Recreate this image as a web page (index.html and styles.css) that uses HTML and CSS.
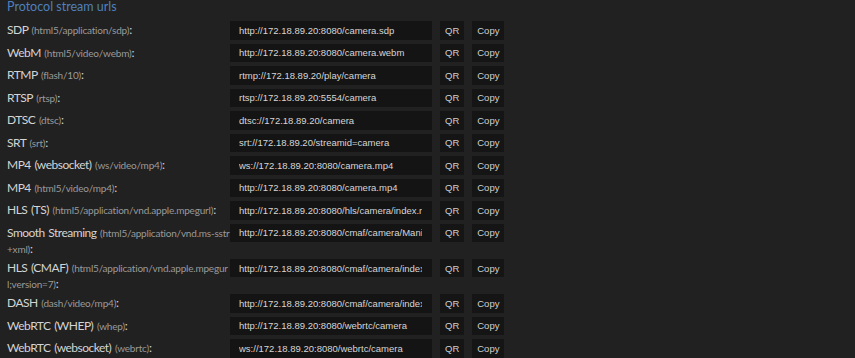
FILE: index.html
```html
<!DOCTYPE html>
<html lang="en">
<head>
    <meta charset="UTF-8">
    <title>Protocol stream urls</title>
    <link rel="stylesheet" href="styles.css">
</head>
<body>

<div id="urlPanel">
    <h3 class="panel-title">Protocol stream urls</h3>
    <div class="url-list">
        <div class="url-row">
            <label>SDP <span class="mime">(html5/application/sdp)</span>:</label>
            <input type="text" readonly value="http://172.18.89.20:8080/camera.sdp">
            <button class="url-button">QR</button>
            <button class="url-button">Copy</button>
        </div>
        <div class="url-row">
            <label>WebM <span class="mime">(html5/video/webm)</span>:</label>
            <input type="text" readonly value="http://172.18.89.20:8080/camera.webm">
            <button class="url-button">QR</button>
            <button class="url-button">Copy</button>
        </div>
        <div class="url-row">
            <label>RTMP <span class="mime">(flash/10)</span>:</label>
            <input type="text" readonly value="rtmp://172.18.89.20/play/camera">
            <button class="url-button">QR</button>
            <button class="url-button">Copy</button>
        </div>
        <div class="url-row">
            <label>RTSP <span class="mime">(rtsp)</span>:</label>
            <input type="text" readonly value="rtsp://172.18.89.20:5554/camera">
            <button class="url-button">QR</button>
            <button class="url-button">Copy</button>
        </div>
        <div class="url-row">
            <label>DTSC <span class="mime">(dtsc)</span>:</label>
            <input type="text" readonly value="dtsc://172.18.89.20/camera">
            <button class="url-button">QR</button>
            <button class="url-button">Copy</button>
        </div>
        <div class="url-row">
            <label>SRT <span class="mime">(srt)</span>:</label>
            <input type="text" readonly value="srt://172.18.89.20/streamid=camera">
            <button class="url-button">QR</button>
            <button class="url-button">Copy</button>
        </div>
        <div class="url-row">
            <label>MP4 (websocket) <span class="mime">(ws/video/mp4)</span>:</label>
            <input type="text" readonly value="ws://172.18.89.20:8080/camera.mp4">
            <button class="url-button">QR</button>
            <button class="url-button">Copy</button>
        </div>
        <div class="url-row">
            <label>MP4 <span class="mime">(html5/video/mp4)</span>:</label>
            <input type="text" readonly value="http://172.18.89.20:8080/camera.mp4">
            <button class="url-button">QR</button>
            <button class="url-button">Copy</button>
        </div>
        <div class="url-row">
            <label>HLS (TS) <span class="mime">(html5/application/vnd.apple.mpegurl)</span>:</label>
            <input type="text" readonly value="http://172.18.89.20:8080/hls/camera/index.m3u8">
            <button class="url-button">QR</button>
            <button class="url-button">Copy</button>
        </div>
        <div class="url-row">
            <label>Smooth Streaming <span class="mime">(html5/application/vnd.ms-sstr+xml)</span>:</label>
            <input type="text" readonly value="http://172.18.89.20:8080/cmaf/camera/Manifest">
            <button class="url-button">QR</button>
            <button class="url-button">Copy</button>
        </div>
        <div class="url-row">
            <label>HLS (CMAF) <span class="mime">(html5/application/vnd.apple.mpegurl;version=7)</span>:</label>
            <input type="text" readonly value="http://172.18.89.20:8080/cmaf/camera/index.m3u8">
            <button class="url-button">QR</button>
            <button class="url-button">Copy</button>
        </div>
        <div class="url-row">
            <label>DASH <span class="mime">(dash/video/mp4)</span>:</label>
            <input type="text" readonly value="http://172.18.89.20:8080/cmaf/camera/index.mpd">
            <button class="url-button">QR</button>
            <button class="url-button">Copy</button>
        </div>
        <div class="url-row">
            <label>WebRTC (WHEP) <span class="mime">(whep)</span>:</label>
            <input type="text" readonly value="http://172.18.89.20:8080/webrtc/camera">
            <button class="url-button">QR</button>
            <button class="url-button">Copy</button>
        </div>
        <div class="url-row">
            <label>WebRTC (websocket) <span class="mime">(webrtc)</span>:</label>
            <input type="text" readonly value="ws://172.18.89.20:8080/webrtc/camera">
            <button class="url-button">QR</button>
            <button class="url-button">Copy</button>
        </div>
    </div>
</div>

</body>
</html>
```
FILE: styles.css
```css
body {
    margin: 0;
    background-color: #212121;
    font-family: Lato, "Open Sans", sans-serif;
    color: #d4d4d4;
}

#urlPanel {
    padding: 0 7px;
}

.panel-title {
    margin: 0;
    height: 19px;
    line-height: 13px;
    font-size: 12.5px;
    font-weight: normal;
    color: #4f80bd;
}

.url-row {
    display: flex;
    align-items: flex-start;
}

.url-row label {
    box-sizing: border-box;
    flex: none;
    width: 223px;
    padding-top: 3.25px;
    line-height: 16px;
    font-size: 12px;
    letter-spacing: -0.5px;
    word-spacing: 1px;
    word-break: break-all;
}

.url-row .mime {
    font-size: 10px;
    letter-spacing: -0.2px;
    word-spacing: 0;
    color: #9a9a9a;
}

.url-row input {
    box-sizing: border-box;
    flex: none;
    width: 202px;
    height: 18.5px;
    margin: 2px 8px 2px 0;
    padding: 0 10px 0 9px;
    border: none;
    background-color: #141414;
    color: #d6d6d6;
    font-family: "Liberation Sans", Arial, sans-serif;
    font-size: 9.5px;
    outline: none;
}

.url-button {
    flex: none;
    height: 18.5px;
    margin: 2px 8px 2px 0;
    padding: 0 5px;
    border: none;
    background-color: #151515;
    color: #d0d0d0;
    font-family: "Liberation Sans", Arial, sans-serif;
    font-size: 9.5px;
}
```
